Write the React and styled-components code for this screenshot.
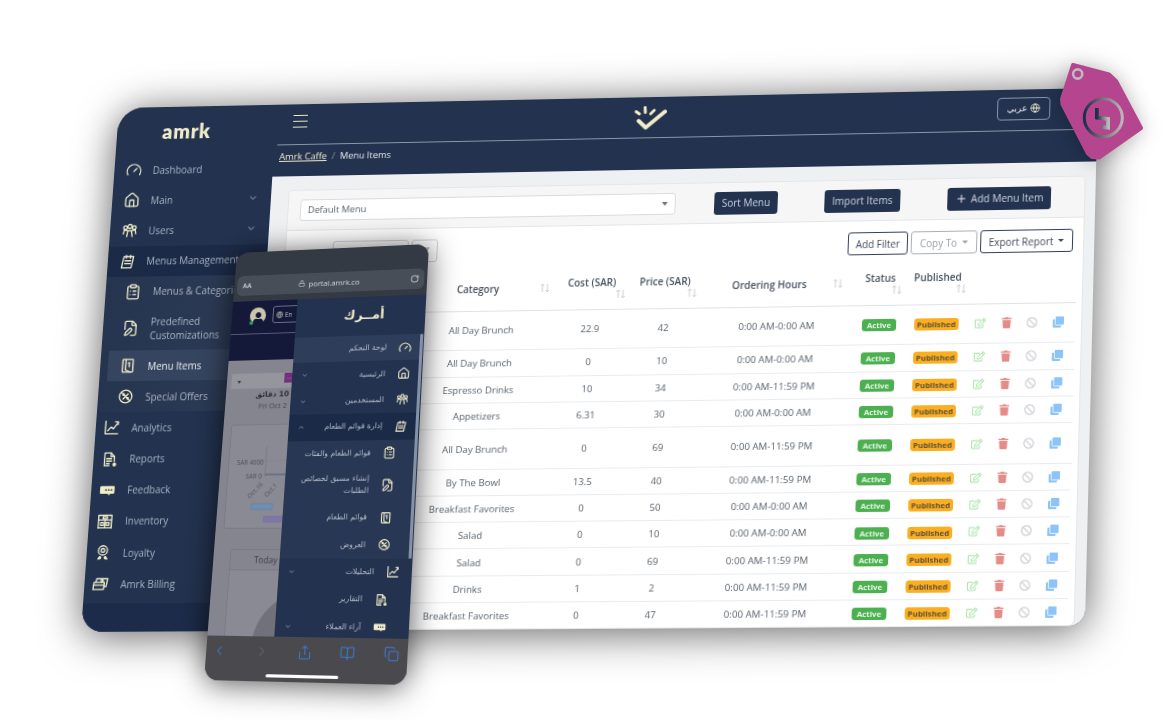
import React from "react";
import styled, { createGlobalStyle } from "styled-components";
import {
  Gauge, House, ChevronDown, ChevronUp, ClipboardList, FilePen, Globe, Plus,
  ChevronLeft, ChevronRight, Share, BookOpen, Copy, Lock, RotateCw,
} from "lucide-react";
import { FaRegEdit, FaTrash, FaBan, FaClone, FaUser } from "react-icons/fa";

/* Homography from a W×H box to a screen-space quad (the artwork's perspective). */
function quadMatrix(W, H, q) {
  const [[x0, y0], [x1, y1], [x2, y2], [x3, y3]] = q;
  const dx1 = x1 - x2, dx2 = x3 - x2, sx = x0 - x1 + x2 - x3;
  const dy1 = y1 - y2, dy2 = y3 - y2, sy = y0 - y1 + y2 - y3;
  const den = dx1 * dy2 - dx2 * dy1;
  const g = (sx * dy2 - dx2 * sy) / den;
  const h = (dx1 * sy - sx * dy1) / den;
  const a = x1 - x0 + g * x1, b = x3 - x0 + h * x3;
  const d = y1 - y0 + g * y1, e = y3 - y0 + h * y3;
  return `matrix3d(${a / W},${d / W},0,${g / W},${b / H},${e / H},0,${h / H},0,0,1,0,${x0},${y0},0,1)`;
}
const windowMatrix = quadMatrix(1000, 530, [[119, 108], [1098, 88], [1085, 626], [81, 632]]);
const phoneMatrix = quadMatrix(200, 433, [[237, 253], [429, 244], [406, 685], [204, 680]]);

const NAVY = "#22324f";
const CREAM = "#f1edc9";

const Global = createGlobalStyle`
  html, body { margin: 0; padding: 0; background: #fff; overflow: hidden; }
  * { box-sizing: border-box; }
  #root { font-family: "Open Sans", "DejaVu Sans", sans-serif; }
`;
const Stage = styled.div`
  position: relative; width: 1176px; height: 720px; overflow: hidden; background: #fff;
`;
const Window = styled.div`
  position: absolute; left: 0; top: 0; width: 1000px; height: 530px;
  transform-origin: 0 0; transform: ${windowMatrix};
  display: flex; background: ${NAVY}; border-radius: 26px 0 16px 22px;
  box-shadow: 0 4px 42px rgba(0,0,0,.62); filter: blur(.35px);
`;
const Clip = styled.div`
  display: flex; width: 100%; height: 100%; overflow: hidden; border-radius: 26px 0 16px 22px;
`;
const Sidebar = styled.aside`
  width: 165px; flex: none; display: flex; flex-direction: column;
  background: ${NAVY};
`;
const Logo = styled.div`
  height: 49px; flex: none; display: flex; align-items: center; justify-content: center;
  padding-right: 20px; color: ${CREAM}; font: 800 20.5px "Lato", sans-serif; letter-spacing: .8px;
`;
const NavItem = styled.div`
  position: relative; height: ${p => p.$h || 31.2}px; flex: none; display: flex; align-items: center;
  margin-left: ${p => (p.$active ? 8 : 0)}px;
  padding-left: ${p => (p.$active ? 12 : p.$sub ? 20 : p.$low ? 8 : 12)}px;
  gap: ${p => (p.$sub || p.$low ? 12 : 11)}px;
  color: ${p => (p.$active ? "#eef0f4" : "#aab4c5")}; font-size: 10px; line-height: 14px;
  background: ${p => p.$active ? "#35445f" : p.$sub ? "transparent" : p.$group ? "#1b2a47" : "transparent"};
  svg.icon { color: ${CREAM}; width: 17px; height: 17px; flex: none; stroke-width: 1.9; }
  svg.caret { position: absolute; right: 13px; top: 10px; color: #7f8ba0; width: 11px; height: 11px; }
`;
const SubGroup = styled.div`
  background: linear-gradient(90deg, #26354f, #2d3b56); flex: none;
`;
const SideFoot = styled.div`
  flex: 1; background: #1c2b49;
  margin-top: 4px;
`;
const Main = styled.div`
  flex: 1; min-width: 0; display: flex; flex-direction: column;
`;
const TopBar = styled.header`
  height: 42px; flex: none; display: flex; align-items: center; margin-left: 3px;
  padding-left: 15px; padding-right: 47px; padding-bottom: 6px;
  border-bottom: 1px solid #8d96a8;
`;
const Burger = styled.div`
  width: 15px; height: 13px; flex: none; display: flex; flex-direction: column; justify-content: space-between;
  i { display: block; height: 1.4px; background: ${CREAM}; }
`;
const Mark = styled.svg`
  margin-left: 335px; width: 34px; height: 26px; margin-top: 6px; flex: none;
`;
const LangBtn = styled.div`
  margin-left: auto; width: 53px; height: 23px; border: 1px solid #8d96a8; border-radius: 4px;
  display: flex; align-items: center; justify-content: center; gap: 3px; color: #eef0f4;
  font: 9px "DejaVu Sans", sans-serif; margin-top: 3px;
  svg { width: 10px; height: 10px; color: ${CREAM}; }
`;
const Crumbs = styled.nav`
  height: 32px; flex: none; padding: 5px 0 0 6px; font-size: 9.5px; color: #e8ebf0;
  display: flex; gap: 5px; align-items: flex-start;
  a { color: ${CREAM}; text-decoration: underline; }
  span { color: #8d96a8; }
`;
const Content = styled.main`
  flex: 1; min-height: 0; background: #eef0f2; padding: 14px 10px 0 18px;
`;
const Card = styled.section`
  height: 100%; background: #fff; border: 1px solid #e4e6e9; border-radius: 4px 4px 6px 6px;
  overflow: hidden; display: flex; flex-direction: column;
`;
const CardHead = styled.div`
  height: 41px; flex: none; background: #f6f6f7; border-bottom: 1px solid #e3e5e8;
  display: flex; align-items: center; padding-left: 12px;
`;
const Select = styled.div`
  width: 384px; height: 22px; flex: none; background: #fff; border: 1px solid #d8dbe0; border-radius: 3px;
  display: flex; align-items: center; justify-content: space-between; padding: 0 7px;
  font-size: 9.5px; color: #555e68; margin-top: -1px;
  i { border: 3.5px solid transparent; border-top: 4px solid #777; border-bottom: 0; }
`;
const DarkBtn = styled.button`
  margin-left: ${p => p.$ml}px; width: ${p => p.$w}px; height: 23px; flex: none; border: 0; border-radius: 3px;
  background: #22324f; color: #cfd5df; font: 10px "Open Sans", sans-serif; padding: 0;
  display: flex; align-items: center; justify-content: center; gap: 4px;
  svg { width: 12px; height: 12px; color: #e8ebf0; }
`;
const FilterRow = styled.div`
  height: 23px; flex: none; margin: 11px 10px 0 48px; display: flex; align-items: center; gap: 3px;
`;
const SearchBox = styled.div`
  width: 78px; height: 23px; flex: none; border: 1px solid #cfd2d8; border-radius: 3px;
`;
const FunnelBox = styled.div`
  width: 27px; height: 23px; flex: none; border: 1px solid #cfd2d8; border-radius: 3px; display: flex;
  align-items: center; justify-content: center;
  i { border: 5px solid transparent; border-top: 7px solid #b0b3b9; border-bottom: 0; }
`;
const OutBtn = styled.button`
  width: ${p => p.$w}px; height: 23px; flex: none; background: #fff; border: 1px solid ${p => p.$muted ? "#a9aeb8" : "#323f5c"};
  border-radius: 3px; color: ${p => p.$muted ? "#9aa0a8" : "#3f4a5c"}; padding: 0;
  margin-left: ${p => (p.$push ? "auto" : 0)};
  font: 9.9px "Open Sans", sans-serif; display: flex; align-items: center; justify-content: center; gap: 5px;
  i { border: 3px solid transparent; border-top: 3.5px solid currentColor; border-bottom: 0; }
`;
const Table = styled.table`
  width: 788px; margin-left: 11px; border-collapse: collapse; table-layout: fixed; flex: none;
  font-size: 9.7px; color: #5a636d;
`;
const Th = styled.th`
  height: 50px; padding: 7px ${p => p.$pr || 0}px 0 ${p => p.$pl || 0}px; font-weight: 600; color: #47525f; font-size: 10px;
  border-bottom: 1px solid #dfe2e6; vertical-align: middle;
`;
const HeadRow = styled.div`
  display: flex; align-items: center; line-height: 12px;
  flex-direction: ${p => (p.$stack ? "column" : "row")};
  b { font-weight: 600; flex: ${p => (p.$stack ? "none" : 1)}; }
  svg { flex: none; ${p => p.$stack && "align-self: flex-end; margin: 1px 3px 0 0;"} }
`;
const Td = styled.td`
  height: ${p => p.$h}px; padding: 0; text-align: center; border-bottom: 1px solid #e9ebee;
`;
const Badge = styled.span`
  display: inline-block; height: 12px; line-height: 12px; width: ${p => p.$w}px; border-radius: 3px;
  background: ${p => p.$bg}; color: ${p => p.$fg}; font-size: 7.8px; font-weight: 700; text-align: center;
  vertical-align: middle;
`;
const Actions = styled.div`
  display: flex; justify-content: space-between; padding: 0 11px 0 6px; align-items: center;
  svg { width: 11px; height: 11px; }
`;
const Sort = () => (
  <svg width="11" height="10" viewBox="0 0 11 10" fill="none" stroke="#c4c8ce" strokeWidth="0.9">
    <path d="M3 9V1M1.2 2.8 3 1l1.8 1.8M8 1v8M6.2 7.2 8 9l1.8-1.8" />
  </svg>
);

/* hand-drawn navigation icons */
const Glyph = ({ children }) => (
  <svg className="icon" viewBox="0 0 24 24" fill="none" stroke="currentColor" strokeLinecap="round" strokeLinejoin="round">
    {children}
  </svg>
);
const GUsers = () => (
  <Glyph>
    <circle cx="12" cy="6.5" r="3" /><circle cx="5.5" cy="8" r="2.6" /><circle cx="18.5" cy="8" r="2.6" />
    <path d="M8 21l1.5-8.5h5L16 21M3 17l1-5.5 5 1M21 17l-1-5.5-5 1" />
  </Glyph>
);
const GNotepad = () => (
  <Glyph>
    <path d="M6.5 5h14l-3 16H3.5z" /><path d="M10 3v4M16 3v4M8.5 11h8M8 15h8" />
  </Glyph>
);
const GMenuBook = () => (
  <Glyph>
    <rect x="4.5" y="3" width="15" height="18" rx="1" /><path d="M9 3v15l7 3" /><path d="M12.5 8.5l1.8-1v6" />
  </Glyph>
);
const GOffer = () => (
  <Glyph>
    <circle cx="12" cy="12" r="9" /><path d="M5.8 5.8l12.4 12.4M15.5 8.5l-7 7" />
    <circle cx="9" cy="9.5" r="1" fill="currentColor" /><circle cx="15" cy="14.5" r="1" fill="currentColor" />
  </Glyph>
);
const GChart = () => (
  <Glyph>
    <path d="M3 3v18h18" /><path d="M6.5 16.5l4.5-5 3.5 2.5 6.5-9" /><path d="M17 4h4v4" />
  </Glyph>
);
const GReport = () => (
  <Glyph>
    <path d="M12 21H5V3h9l5 5v7" /><path d="M14 3v5h5M8 11h7M8 14.5h7M8 18h4" />
    <circle cx="19.5" cy="19.5" r="1.8" fill="currentColor" />
  </Glyph>
);
const GFeedback = () => (
  <svg className="icon" viewBox="0 0 24 24">
    <path fill="currentColor" d="M3 6h18a1.5 1.5 0 0 1 1.5 1.5v8A1.5 1.5 0 0 1 21 17h-4.5l-1.8 2.5L13 17H3a1.5 1.5 0 0 1-1.5-1.5v-8A1.5 1.5 0 0 1 3 6z" />
    <circle cx="10" cy="11.5" r="1.2" fill="#22324f" /><circle cx="14" cy="11.5" r="1.2" fill="#22324f" /><circle cx="18" cy="11.5" r="1.2" fill="#22324f" />
  </svg>
);
const GStock = () => (
  <Glyph>
    <path d="M2.5 21V3.5h19V21" /><path d="M2.5 10h19M2.5 21h19M12 10v11" />
    <rect x="6" y="13.5" width="4" height="4" /><rect x="14" y="13.5" width="4" height="4" /><rect x="9" y="5.5" width="6" height="3" />
  </Glyph>
);
const GMedal = () => (
  <Glyph>
    <circle cx="12" cy="9" r="6.5" /><circle cx="12" cy="9" r="2.6" />
    <path d="M8 17.5l-2.5 3.5 3-.5 1-1.5zM16 17.5l2.5 3.5-3-.5-1-1.5z" fill="currentColor" />
  </Glyph>
);
const GBilling = () => (
  <Glyph>
    <path d="M6 5h16l-2 11H4z" /><path d="M2.5 10h15l-1 10H1.5z" fill="#22324f" /><path d="M2 14h15" />
    <circle cx="14" cy="8" r="1.6" />
  </Glyph>
);

/* phone */
const Phone = styled.div`
  position: absolute; left: 0; top: 0; width: 200px; height: 433px; transform-origin: 0 0;
  transform: ${phoneMatrix}; background: #343a44; border-radius: 13px 13px 14px 14px;
  box-shadow: 0 2px 30px rgba(0,0,0,.68); display: flex; flex-direction: column; overflow: hidden;
  filter: blur(.35px);
`;
const Chrome = styled.div`
  height: 52px; flex: none; padding: 25px 3px 0; background: #343a44;
`;
const UrlBar = styled.div`
  position: relative; height: 21px; background: #484e58; border-radius: 6px; display: flex; align-items: center;
  justify-content: center; gap: 3px; color: #d8dade; font-size: 7.8px;
  svg { width: 7px; height: 7px; }
`;
const Aa = styled.span`
  position: absolute; left: 6px; font-size: 7px; font-weight: 600;
`;
const Reload = styled.span`
  position: absolute; right: 5px; display: flex; svg { width: 9px; height: 9px; }
`;
const PhoneBody = styled.div`
  flex: 1; min-height: 0; display: flex;
`;
const Dim = styled.div`
  width: 68px; flex: none; overflow: hidden; background: #85858f; position: relative;
`;
const DimHead = styled.div`
  width: 200px; height: 62px; background: #14193a;
`;
const DimTop = styled.div`
  height: 35px; border-bottom: 1px solid #585c70; display: flex; align-items: center; padding: 0 0 4px 19px; gap: 7px;
`;
const Avatar = styled.div`
  position: relative; width: 17px; height: 17px; border-radius: 50%; background: #c9c6ac; color: #14193a; flex: none;
  display: flex; align-items: flex-end; justify-content: center; overflow: visible;
  svg { width: 12px; height: 12px; }
  &::after { content: ""; position: absolute; left: 0; bottom: -1px; width: 4px; height: 4px; border-radius: 50%; background: #2f9e4f; }
`;
const EnBtn = styled.div`
  width: 40px; height: 18px; flex: none; border: 1px solid #6d7186; border-radius: 3px; display: flex; align-items: center; gap: 2px;
  padding-left: 3px; color: #bfc0b4; font-size: 6.5px; svg { width: 7px; height: 7px; }
`;
const DimSelect = styled.div`
  width: 180px; height: 17px; margin: 13px 0 0 4px; background: #95959e; border: 1px solid #8a8a94; display: flex;
  align-items: flex-start; padding: 5px 0 0 6px;
  i { border: 2.5px solid transparent; border-top: 3px solid #3a3a44; border-bottom: 0; margin-top: 2px; }
  em { margin: -5px 0 0 45px; width: 10px; height: 10px; background: #74307c; color: #ccc; font: 6px/8px sans-serif; text-align: center; }
`;
const DimBold = styled.div`
  width: 66px; font: 700 7.6px/11px "DejaVu Sans", sans-serif; color: #2e2e38; direction: rtl; white-space: nowrap;
`;
const DimDate = styled.div`
  margin: 0 0 0 35px; width: 100px; font-size: 7.6px; line-height: 12px; color: #46464f;
`;
const ChartCard = styled.div`
  position: relative; width: 200px; height: 105px; margin: 13px 0 0 8px; background: #8a8a94; border: 1px solid #7b7b85;
  border-radius: 3px; overflow: hidden;
`;
const Tick = styled.span`
  position: absolute; left: ${p => p.$x}px; top: ${p => p.$y}px; font-size: 6.4px; color: #4f4f59;
  transform: ${p => p.$r ? `rotate(${p.$r}deg)` : "none"}; white-space: nowrap;
`;
const TodayCard = styled.div`
  position: relative; width: 200px; height: 110px; margin: 20px 0 0 17px; background: #8a8a94;
  border: 1px solid #7b7b85; border-radius: 3px 3px 0 0; overflow: hidden;
`;
const TodayHead = styled.div`
  height: 20px; background: #85858f; border-bottom: 1px solid #7b7b85; padding-left: 24px; font-size: 8.4px; line-height: 20px; color: #3d3d47;
`;
const Pie = styled.div`
  position: absolute; left: 27px; top: 40px; width: 110px; height: 110px; border-radius: 50%; background: #71717c;
`;
const PSide = styled.div`
  position: relative; flex: 1; min-width: 0; background: #22324f; direction: rtl; overflow: hidden; display: flex; flex-direction: column;
`;
const PLogo = styled.div`
  height: 40px; flex: none; display: flex; align-items: center; justify-content: center; padding: 0 0 4px 8px;
  color: ${CREAM}; font: 700 13px "DejaVu Sans", sans-serif;
`;
const PItem = styled.div`
  position: relative; height: ${p => p.$h || 26.4}px; flex: none; display: flex; align-items: center;
  gap: 12px; padding-right: ${p => (p.$sub ? 22 : 12)}px; font: 7.6px/12px "DejaVu Sans", sans-serif; color: #b8bfcc;
  background: ${p => p.$active ? "#2e3d5a" : p.$group ? "#1b2a47" : "transparent"};
  svg.icon { width: 13px; height: 13px; color: ${CREAM}; flex: none; stroke-width: 2; }
  svg.caret { position: absolute; left: 9px; top: 9px; width: 8px; height: 8px; color: #7f8ba0; }
  span { max-width: 86px; }
`;
const PSubs = styled.div` background: #283754; flex: none; `;
const ScrollThumb = styled.div`
  position: absolute; right: 1px; top: 40px; width: 3px; height: 222px; border-radius: 2px; background: #8592a6;
`;
const SafariBar = styled.div`
  position: relative; height: 43px; flex: none; background: #4a4a4e; display: flex; justify-content: space-between;
  padding: 7px 8px 0 6px; align-items: flex-start; color: #3b79cf;
  svg { width: 15px; height: 15px; stroke-width: 1.6; }
`;
const HomeBar = styled.div`
  position: absolute; left: 62px; bottom: 4px; width: 72px; height: 3px; border-radius: 2px; background: #fff;
`;
const Tag = styled.svg`
  position: absolute; left: 1055px; top: 55px; width: 95px; height: 110px;
  filter: drop-shadow(0 2px 10px rgba(0,0,0,.25));
`;

const rows = [
  ["All Day Brunch", "22.9", "42", "0:00 AM-0:00 AM", 39.5],
  ["All Day Brunch", "0", "10", "0:00 AM-0:00 AM", 26.5],
  ["Espresso Drinks", "10", "34", "0:00 AM-11:59 PM", 26.3],
  ["Appetizers", "6.31", "30", "0:00 AM-0:00 AM", 26.3],
  ["All Day Brunch", "0", "69", "0:00 AM-11:59 PM", 39.5],
  ["By The Bowl", "13.5", "40", "0:00 AM-11:59 PM", 26.3],
  ["Breakfast Favorites", "0", "50", "0:00 AM-0:00 AM", 26.3],
  ["Salad", "0", "10", "0:00 AM-0:00 AM", 26.3],
  ["Salad", "0", "69", "0:00 AM-11:59 PM", 26.3],
  ["Drinks", "1", "2", "0:00 AM-11:59 PM", 26.3],
  ["Breakfast Favorites", "0", "47", "0:00 AM-11:59 PM", 26.3],
];
const Ic = (C) => <C className="icon" />;
const Caret = () => <ChevronDown className="caret" />;

export default function App() {
  return (
    <Stage>
      <Global />
      <Window>
        <Clip>
          <Sidebar>
            <Logo>amrk</Logo>
            <NavItem>{Ic(Gauge)}Dashboard</NavItem>
            <NavItem>{Ic(House)}Main<Caret /></NavItem>
            <NavItem><GUsers />Users<Caret /></NavItem>
            <NavItem $group><GNotepad />Menus Management</NavItem>
            <SubGroup>
              <NavItem $sub>{Ic(ClipboardList)}Menus &amp; Categories</NavItem>
              <NavItem $sub $h={44}>{Ic(FilePen)}<span>Predefined<br />Customizations</span></NavItem>
              <NavItem $active $sub><GMenuBook />Menu Items</NavItem>
              <NavItem $sub><GOffer />Special Offers</NavItem>
            </SubGroup>
            <NavItem $low><GChart />Analytics</NavItem>
            <NavItem $low><GReport />Reports</NavItem>
            <NavItem $low><GFeedback />Feedback</NavItem>
            <NavItem $low><GStock />Inventory</NavItem>
            <NavItem $low><GMedal />Loyalty</NavItem>
            <NavItem $low><GBilling />Amrk Billing</NavItem>
            <SideFoot />
          </Sidebar>
          <Main>
            <TopBar>
              <Burger><i /><i /><i /></Burger>
              <Mark viewBox="33 23 34 26" fill="none" stroke={CREAM} strokeLinecap="round" strokeLinejoin="round">
                <path d="M38.5 39 46 46 65 30" strokeWidth="4" />
                <path d="M35.5 29.5 39 32M44.5 25.5 45 30.5M54 28.5 50.5 32" strokeWidth="3" />
              </Mark>
              <LangBtn>عربي<Globe /></LangBtn>
            </TopBar>
            <Crumbs><a>Amrk Caffe</a><span>/</span>Menu Items</Crumbs>
            <Content>
              <Card>
                <CardHead>
                  <Select>Default Menu<i /></Select>
                  <DarkBtn $ml={39} $w={64}>Sort Menu</DarkBtn>
                  <DarkBtn $ml={47} $w={76}>Import Items</DarkBtn>
                  <DarkBtn $ml={47} $w={103}><Plus />Add Menu Item</DarkBtn>
                </CardHead>
                <FilterRow>
                  <SearchBox />
                  <FunnelBox><i /></FunnelBox>
                  <OutBtn $w={60} $push>Add Filter</OutBtn>
                  <OutBtn $w={66} $muted>Copy To<i /></OutBtn>
                  <OutBtn $w={92}>Export Report<i /></OutBtn>
                </FilterRow>
                <Table>
                  <colgroup>
                    <col style={{ width: 122 }} /><col style={{ width: 144 }} /><col style={{ width: 76 }} />
                    <col style={{ width: 72 }} /><col style={{ width: 155 }} /><col style={{ width: 50 }} />
                    <col style={{ width: 64 }} /><col style={{ width: 105 }} />
                  </colgroup>
                  <thead>
                    <tr>
                      <Th />
                      <Th $pr={4} $pl={4}><HeadRow><b>Category</b><Sort /></HeadRow></Th>
                      <Th><HeadRow $stack><b>Cost (SAR)</b><Sort /></HeadRow></Th>
                      <Th><HeadRow $stack><b>Price (SAR)</b><Sort /></HeadRow></Th>
                      <Th $pr={12} $pl={6}><HeadRow><b>Ordering Hours</b><Sort /></HeadRow></Th>
                      <Th><HeadRow $stack><b>Status</b><Sort /></HeadRow></Th>
                      <Th><HeadRow $stack><b>Published</b><Sort /></HeadRow></Th>
                      <Th />
                    </tr>
                  </thead>
                  <tbody>
                    {rows.map((r, i) => (
                      <tr key={i}>
                        <Td $h={r[4]} />
                        <Td $h={r[4]}>{r[0]}</Td>
                        <Td $h={r[4]}>{r[1]}</Td>
                        <Td $h={r[4]}>{r[2]}</Td>
                        <Td $h={r[4]}>{r[3]}</Td>
                        <Td $h={r[4]}><Badge $w={34} $bg="#4cb050" $fg="#e8f6e8">Active</Badge></Td>
                        <Td $h={r[4]}><Badge $w={44} $bg="#fbae1f" $fg="#5a5040">Published</Badge></Td>
                        <Td $h={r[4]}>
                          <Actions>
                            <FaRegEdit color="#a3e4a3" />
                            <FaTrash color="#e48d88" />
                            <FaBan color="#d4d6da" />
                            <FaClone color="#8dc4f7" />
                          </Actions>
                        </Td>
                      </tr>
                    ))}
                  </tbody>
                </Table>
              </Card>
            </Content>
          </Main>
        </Clip>
      </Window>

      <Phone>
        <Chrome>
          <UrlBar>
            <Aa>AA</Aa>
            <Lock />portal.amrk.co
            <Reload><RotateCw /></Reload>
          </UrlBar>
        </Chrome>
        <PhoneBody>
          <Dim>
            <DimHead>
              <DimTop>
                <Avatar><FaUser /></Avatar>
                <EnBtn><Globe />En</EnBtn>
              </DimTop>
            </DimHead>
            <DimSelect><i /><em>...</em></DimSelect>
            <DimBold>10 دقائق</DimBold>
            <DimDate>Fri Oct 2</DimDate>
            <ChartCard>
              <Tick $x={8} $y={33}>SAR 4000</Tick>
              <Tick $x={18} $y={47}>SAR 0</Tick>
              <Tick $x={19} $y={61} $r={-48}>Oct.16</Tick>
              <Tick $x={37} $y={61} $r={-48}>Oct.1</Tick>
              <svg width="200" height="105" viewBox="0 0 200 105" fill="none">
                <path d="M38 22V52" stroke="#74747e" strokeWidth=".7" />
                <path d="M34 36H200" stroke="#7c7c86" strokeWidth=".5" />
                <path d="M38 50H200" stroke="#4b5d73" strokeWidth="1" />
                <rect x="26" y="79" width="22" height="6" fill="#6f8eb0" stroke="#5d7fa6" strokeWidth=".6" />
                <rect x="39" y="91" width="24" height="7" fill="#7f76a6" />
              </svg>
            </ChartCard>
            <TodayCard>
              <TodayHead>Today</TodayHead>
              <Pie />
            </TodayCard>
          </Dim>
          <PSide>
            <PLogo>أمــرك</PLogo>
            <PItem $active>{Ic(Gauge)}<span>لوحة التحكم</span></PItem>
            <PItem>{Ic(House)}<span>الرئيسية</span><Caret /></PItem>
            <PItem><GUsers /><span>المستخدمين</span><Caret /></PItem>
            <PItem $group><GNotepad /><span>إدارة قوائم الطعام</span><ChevronUp className="caret" /></PItem>
            <PSubs>
              <PItem $sub>{Ic(ClipboardList)}<span>قوائم الطعام والفئات</span></PItem>
              <PItem $sub $h={37}>{Ic(FilePen)}<span>إنشاء مسبق لخصائص الطلبات</span></PItem>
              <PItem $sub><GMenuBook /><span>قوائم الطعام</span></PItem>
              <PItem $sub><GOffer /><span>العروض</span></PItem>
            </PSubs>
            <PItem><GChart /><span>التحليلات</span><Caret /></PItem>
            <PItem $sub><GReport /><span>التقارير</span></PItem>
            <PItem $sub><GFeedback /><span>آراء العملاء</span><Caret /></PItem>
            <ScrollThumb />
          </PSide>
        </PhoneBody>
        <SafariBar>
          <ChevronLeft />
          <ChevronRight color="#66666b" />
          <Share />
          <BookOpen />
          <Copy />
          <HomeBar />
        </SafariBar>
      </Phone>

      <Tag viewBox="1055 55 95 110">
        <defs>
          <linearGradient id="ring" x1="0" x2="1" y1="0" y2="0">
            <stop offset="0" stopColor="#1f2d4d" />
            <stop offset=".45" stopColor="#6f6f78" />
            <stop offset="1" stopColor="#b9b9b9" />
          </linearGradient>
        </defs>
        <path fill="#b5458e" stroke="#b5458e" strokeWidth="4" strokeLinejoin="round"
          d="M1073 65 1109 74.5 1116 81 1141 128 1099 157.5 1092 157 1088 153.5 1062.5 104 1062 99Z" />
        <circle cx="1077.7" cy="74" r="4.6" fill="none" stroke="#c0b8c0" strokeWidth="2.6" />
        <circle cx="1103.3" cy="117.7" r="19" fill="none" stroke="url(#ring)" strokeWidth="3" />
        <path d="M1097 108V117.5L1108 119V127.5L1101 127" fill="none" stroke="url(#ring)" strokeWidth="4" />
      </Tag>
    </Stage>
  );
}
